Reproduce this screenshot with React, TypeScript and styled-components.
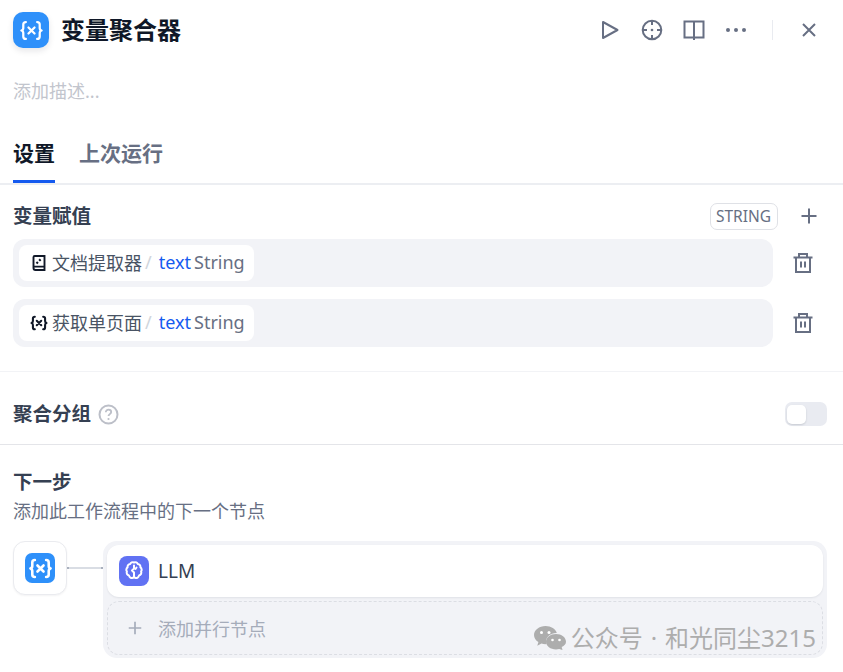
import React from "react";
import styled, { createGlobalStyle } from "styled-components";

const GlobalStyle = createGlobalStyle`
    html, body {
        margin: 0;
        padding: 0;
        background: #fff;
        font-family: "Noto Sans", "Noto Sans CJK SC", sans-serif;
    }
`

const VarGlyph = ({ size, color, weight = 2 }: { size: number, color: string, weight?: number }) => (
    <svg width={size} height={size} viewBox="0 0 24 24" fill="none" stroke={color} strokeWidth={weight} strokeLinecap="round" strokeLinejoin="round">
        <path d="M7 4.500c-1.600 0-2.300.8-2.300 2.200v3c0 1.200-.6 2-1.700 2.300 1.100.3 1.700 1.100 1.700 2.300v3c0 1.400.7 2.200 2.300 2.200" />
        <path d="M17 4.500c1.600 0 2.300.8 2.300 2.200v3c0 1.200.6 2 1.700 2.300-1.100.3-1.700 1.100-1.700 2.300v3c0 1.400-.7 2.200-2.300 2.200" />
        <path d="M9.300 9.300l5.400 5.400M14.700 9.300l-5.400 5.400" />
    </svg>
)

const ICON = "#676f83"

const PlayIcon = () => (
    <svg width="24" height="24" viewBox="0 0 24 24" fill="none" stroke={ICON} strokeWidth="2" strokeLinejoin="round">
        <path d="M5 4v16l14.500-8z" />
    </svg>
)

const TargetIcon = () => (
    <svg width="24" height="24" viewBox="0 0 24 24" fill="none" stroke={ICON} strokeWidth="2">
        <circle cx="12" cy="12" r="9.300" />
        <path d="M12 2.700v4.300M12 17v4.300M2.700 12H7M17 12h4.300" />
        <circle cx="12" cy="12" r="1.300" fill={ICON} stroke="none" />
    </svg>
)

const BookIcon = () => (
    <svg width="24" height="24" viewBox="0 0 24 24" fill="none" stroke={ICON} strokeWidth="2">
        <path d="M2.500 3.500h19v16h-19zM12 3.500V22" />
    </svg>
)

const MoreIcon = () => (
    <svg width="24" height="24" viewBox="0 0 24 24" fill={ICON}>
        <circle cx="4" cy="12" r="2" />
        <circle cx="12" cy="12" r="2" />
        <circle cx="20" cy="12" r="2" />
    </svg>
)

const CloseIcon = () => (
    <svg width="24" height="24" viewBox="0 0 24 24" fill="none" stroke={ICON} strokeWidth="2">
        <path d="M6 6l12 12M18 6L6 18" />
    </svg>
)

const PlusIcon = ({ color, size }: { color: string, size: number }) => (
    <svg width={size} height={size} viewBox="0 0 24 24" fill="none" stroke={color} strokeWidth="2">
        <path d="M12 4.500v15M4.500 12h15" />
    </svg>
)

const TrashIcon = () => (
    <svg width="24" height="24" viewBox="0 0 24 24" fill="none" stroke={ICON} strokeWidth="2">
        <path d="M2.500 6.500h19M8 6.500V3h8v3.500M5 6.500V21h14V6.500" />
        <path d="M10 10.500v6M14 10.500v6" />
    </svg>
)

const DocIcon = () => (
    <svg width="18" height="18" viewBox="0 0 18 18" fill="none" stroke="#101828" strokeWidth="1.900">
        <path d="M3.500 14V3.200c0-.7.500-1.200 1.200-1.200h9.800v14H5.500a2 2 0 0 1-2-2zM3.800 12.600h10.700" />
        <path d="M6.500 9.500l5-5" strokeWidth="2.200" strokeDasharray="2 1.800" />
    </svg>
)

const HelpIcon = () => (
    <svg width="21" height="21" viewBox="0 0 21 21" fill="none" stroke="#bcbfc8" strokeWidth="2">
        <circle cx="10.500" cy="10.500" r="9" />
        <path d="M7.800 8.300c0-1.600 1.200-2.600 2.700-2.600s2.700 1 2.700 2.400c0 2-2.700 2.100-2.700 4" strokeWidth="1.800" />
        <circle cx="10.500" cy="15" r="1.100" fill="#bcbfc8" stroke="none" />
    </svg>
)

const BrainIcon = () => (
    <svg width="22" height="22" viewBox="0 0 22 22" fill="none" stroke="#fff" strokeWidth="2" strokeLinejoin="round" strokeLinecap="round">
        <path d="M11 2.500c-1.600-.8-3.400.100-3.800 1.600-1.800.1-3 1.700-2.600 3.300-1.400.9-1.700 2.900-.7 4.100-.7 1.700.3 3.500 2 3.900.5 1.900 2.300 3 3.900 2.400.5-.2.900-.4 1.200-.7.300.3.700.5 1.200.7 1.600.6 3.400-.5 3.900-2.400 1.700-.4 2.700-2.200 2-3.900 1-1.200.7-3.200-.7-4.100.4-1.600-.8-3.200-2.600-3.300C14.400 2.600 12.600 1.700 11 2.500z" />
        <path d="M11 5.500v3l-2 2 2 2v5M13.500 7.500l-1 1.500" />
    </svg>
)

const WeChatIcon = () => (
    <svg width="32" height="24" viewBox="0 0 32 24" fill="#adadad">
        <path d="M11.500 0C5.200 0 0 4 0 9c0 2.900 1.700 5.400 4.400 7.100L3.300 19.800l4.200-2.200c1.300.4 2.600.6 4 .6.400 0 .8 0 1.100-.1-.3-.9-.4-1.800-.4-2.700 0-4.600 4.400-8.300 9.900-8.300h.7C21.800 3 17 0 11.500 0z" />
        <path d="M22 8c-5.500 0-10 3.400-10 7.700s4.500 7.700 10 7.700c1.100 0 2.200-.2 3.200-.5l3.300 1.100-.8-2.900c2.600-1.400 4.300-3 4.300-5.400C32 11.400 27.500 8 22 8z" />
        <circle cx="7.500" cy="6.500" r="1.500" fill="#fff" />
        <circle cx="15" cy="6.500" r="1.500" fill="#fff" />
        <circle cx="18.500" cy="14" r="1.300" fill="#fff" />
        <circle cx="25.500" cy="14" r="1.300" fill="#fff" />
    </svg>
)

const assigned = [
    { name: "文档提取器", kind: "doc" },
    { name: "获取单页面", kind: "var" },
]

const App = () => {
    return (
        <Panel>
            <GlobalStyle />
            <Header>
                <BlockIcon size={36} radius={10} shadow>
                    <VarGlyph size={27} color="#fff" />
                </BlockIcon>
                <Title>变量聚合器</Title>
                <HeaderActions>
                    <PlayIcon />
                    <TargetIcon />
                    <BookIcon />
                    <MoreIcon />
                    <ActionDivider />
                    <CloseIcon />
                </HeaderActions>
            </Header>
            <Description>添加描述...</Description>
            <Tabs>
                <Tab active>设置</Tab>
                <Tab>上次运行</Tab>
            </Tabs>
            <AssignSection>
                <FieldHead>
                    <FieldTitle>变量赋值</FieldTitle>
                    <TypeBadge>STRING</TypeBadge>
                    <PlusIcon color={ICON} size={24} />
                </FieldHead>
                {assigned.map((item) => (
                    <VarRow key={item.name}>
                        <VarBox>
                            <VarChip>
                                <ChipIcon>
                                    {item.kind === "doc" ? <DocIcon /> : <VarGlyph size={24} color="#101828" weight={2.500} />}
                                </ChipIcon>
                                <ChipName>{item.name}</ChipName>
                                <Slash>/</Slash>
                                <VarName>text</VarName>
                                <VarType>String</VarType>
                            </VarChip>
                        </VarBox>
                        <TrashSlot><TrashIcon /></TrashSlot>
                    </VarRow>
                ))}
            </AssignSection>
            <GroupSection>
                <FieldTitle>聚合分组</FieldTitle>
                <HelpIcon />
                <Toggle><Knob /></Toggle>
            </GroupSection>
            <NextSection>
                <NextTitle>下一步</NextTitle>
                <NextDesc>添加此工作流程中的下一个节点</NextDesc>
                <NextFlow>
                    <SourceNode>
                        <BlockIcon size={30} radius={7}>
                            <VarGlyph size={27} color="#fff" weight={2.300} />
                        </BlockIcon>
                    </SourceNode>
                    <Connector />
                    <Branches>
                        <NodeCard>
                            <LlmIcon><BrainIcon /></LlmIcon>
                            <NodeName>LLM</NodeName>
                        </NodeCard>
                        <AddCard>
                            <PlusIcon color="#a5acba" size={20} />
                            <AddLabel>添加并行节点</AddLabel>
                        </AddCard>
                    </Branches>
                </NextFlow>
            </NextSection>
            <Watermark>
                <WeChatIcon />
                <span>公众号<WatermarkDot>·</WatermarkDot>和光同尘3215</span>
            </Watermark>
        </Panel>
    )
}

export default App;

const Panel = styled.div`
    position: relative;
    width: 843px;
    height: 672px;
    overflow: hidden;
    background: #fff;
`

const Header = styled.div`
    display: flex;
    align-items: center;
    height: 36px;
    padding: 12px 22px 0 13px;
`

const BlockIcon = styled.div<{ size: number, radius: number, shadow?: boolean }>`
    display: flex;
    align-items: center;
    justify-content: center;
    flex-shrink: 0;
    width: ${props => props.size}px;
    height: ${props => props.size}px;
    border-radius: ${props => props.radius}px;
    background: #2e90fa;
    box-shadow: ${props => props.shadow ? "0 3px 6px rgba(16, 24, 40, 0.1)" : "none"};
`

const Title = styled.div`
    margin-left: 12px;
    font-size: 24px;
    font-weight: 700;
    line-height: 36px;
    color: #101828;
`

const HeaderActions = styled.div`
    display: flex;
    align-items: center;
    gap: 18px;
    margin-left: auto;
`

const ActionDivider = styled.div`
    width: 1px;
    height: 20px;
    margin: 0 6px 0 6px;
    background: #e9ebf0;
`

const Description = styled.div`
    margin: 31px 0 0 13px;
    font-size: 18px;
    line-height: 24px;
    color: #c2c5cd;
`

const Tabs = styled.div`
    display: flex;
    gap: 24px;
    height: 53px;
    margin-top: 27px;
    padding: 0 13px;
    border-bottom: 2px solid #eceef2;
`

const Tab = styled.div<{ active?: boolean }>`
    height: 53px;
    box-sizing: border-box;
    padding-top: 9px;
    font-size: 21px;
    font-weight: 700;
    line-height: 28px;
    color: ${props => props.active ? "#101828" : "#676f83"};
    border-bottom: ${props => props.active ? "3px solid #155aef" : "none"};
`

const AssignSection = styled.div`
    display: flex;
    flex-direction: column;
    gap: 12px;
    padding: 17px 0 24px 13px;
    border-bottom: 1px solid #f2f3f6;
`

const FieldHead = styled.div`
    display: flex;
    align-items: center;
    height: 28px;
    margin-bottom: -3px;
    padding-right: 22px;
`

const FieldTitle = styled.div`
    font-size: 19.500px;
    font-weight: 700;
    line-height: 28px;
    color: #354052;
`

const TypeBadge = styled.div`
    margin: 0 19px 0 auto;
    padding: 0 6px 0 5px;
    height: 25px;
    border: 1px solid #dfe1e6;
    border-radius: 7px;
    font-size: 15.500px;
    line-height: 24px;
    color: #676f83;
`

const VarRow = styled.div`
    display: flex;
    align-items: center;
`

const VarBox = styled.div`
    display: flex;
    align-items: center;
    width: 760px;
    height: 48px;
    box-sizing: border-box;
    padding-left: 6px;
    border-radius: 12px;
    background: #f2f3f7;
`

const VarChip = styled.div`
    display: flex;
    align-items: center;
    width: 235px;
    height: 36px;
    box-sizing: border-box;
    padding: 0 0 2px 10px;
    border-radius: 8px;
    background: #fff;
`

const ChipIcon = styled.div`
    display: flex;
    align-items: center;
    justify-content: center;
    width: 20px;
    margin: 2px 3px 0 0;
`

const ChipName = styled.span`
    font-size: 18px;
    color: #495464;
`

const Slash = styled.span`
    margin: 0 7px 0 3px;
    font-size: 18px;
    color: #d0d5dc;
`

const VarName = styled.span`
    margin-right: 3px;
    font-size: 18px;
    color: #155aef;
`

const VarType = styled.span`
    font-size: 18px;
    color: #676f83;
`

const TrashSlot = styled.div`
    display: flex;
    margin-left: 18px;
`

const GroupSection = styled.div`
    display: flex;
    align-items: center;
    gap: 7px;
    height: 60px;
    padding: 12px 16px 0 13px;
    border-bottom: 1px solid #e4e5e9;
`

const Toggle = styled.div`
    display: flex;
    align-items: center;
    width: 42px;
    height: 24px;
    box-sizing: border-box;
    padding-left: 2px;
    margin-left: auto;
    border-radius: 7px;
    background: #e9ebf1;
`

const Knob = styled.div`
    width: 19px;
    height: 19px;
    border-radius: 5px;
    background: #fff;
    box-shadow: 0 1px 2px rgba(16, 24, 40, 0.15);
`

const NextSection = styled.div`
    padding: 23px 16px 0 13px;
`

const NextTitle = styled.div`
    font-size: 19.500px;
    font-weight: 700;
    line-height: 28px;
    color: #354052;
`

const NextDesc = styled.div`
    margin-top: 2px;
    font-size: 18px;
    line-height: 26px;
    color: #676f83;
`

const NextFlow = styled.div`
    display: flex;
    align-items: flex-start;
    margin-top: 17px;
`

const SourceNode = styled.div`
    display: flex;
    align-items: center;
    justify-content: center;
    width: 54px;
    height: 54px;
    box-sizing: border-box;
    border: 1px solid #eaebef;
    border-radius: 12px;
    box-shadow: 0 1px 2px rgba(16, 24, 40, 0.05);
    background: #fff;
`

const Connector = styled.div`
    width: 36px;
    height: 2px;
    margin-top: 26px;
    background: #d9dde4;
    border-left: 2px solid #a9b0bd;
    border-right: 2px solid #a9b0bd;
    box-sizing: border-box;
`

const Branches = styled.div`
    flex: 1;
    display: flex;
    flex-direction: column;
    gap: 4px;
    padding: 4px 4px 3px;
    border-radius: 14px;
    background: #f2f3f7;
`

const NodeCard = styled.div`
    display: flex;
    align-items: center;
    gap: 9px;
    height: 52px;
    box-sizing: border-box;
    padding-left: 12px;
    border-radius: 12px;
    background: #fff;
    box-shadow: 0 1px 2px rgba(16, 24, 40, 0.08);
`

const LlmIcon = styled.div`
    display: flex;
    align-items: center;
    justify-content: center;
    width: 30px;
    height: 30px;
    border-radius: 8px;
    background: #6172f3;
`

const NodeName = styled.div`
    font-size: 19px;
    color: #354052;
`

const AddCard = styled.div`
    display: flex;
    align-items: center;
    height: 54px;
    box-sizing: border-box;
    padding-left: 17px;
    border: 1px dashed #dcdee4;
    border-radius: 12px;
`

const AddLabel = styled.div`
    margin-left: 13px;
    font-size: 18px;
    color: #a5acba;
`

const Watermark = styled.div`
    position: absolute;
    right: 27px;
    top: 622px;
    display: flex;
    align-items: center;
    gap: 5px;
    font-size: 24px;
    line-height: 32px;
    color: #adadad;
`

const WatermarkDot = styled.span`
    margin: 0 8px;
`
